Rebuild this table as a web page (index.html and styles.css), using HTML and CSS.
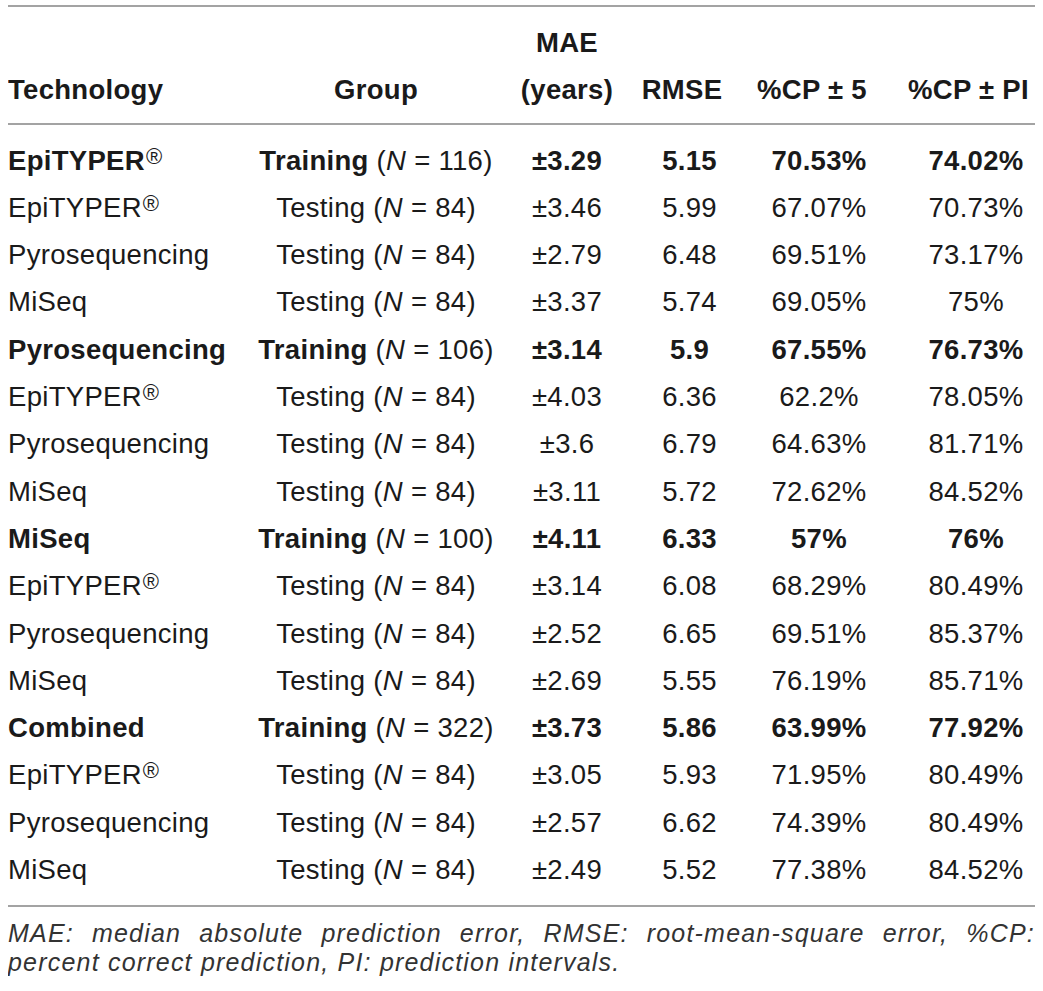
FILE: index.html
```html
<!DOCTYPE html>
<html lang="en">
<head>
  <meta charset="UTF-8" />
  <meta name="viewport" content="width=device-width, initial-scale=1.0"/>
  <title>Prediction accuracy by technology</title>
  <link rel="stylesheet" href="styles.css">
</head>
<body>
  <table class="results">
    <colgroup>
      <col class="c-tech">
      <col class="c-group">
      <col class="c-mae">
      <col class="c-rmse">
      <col class="c-cp5">
      <col class="c-cppi">
    </colgroup>
    <thead>
      <tr>
        <th class="tech">Technology</th>
        <th>Group</th>
        <th>MAE<br>(years)</th>
        <th>RMSE</th>
        <th class="cp5">%CP ± 5</th>
        <th>%CP ± PI</th>
      </tr>
    </thead>
    <tbody>
      <tr class="train">
        <td class="tech">EpiTYPER<sup>®</sup></td>
        <td>Training <span class="n">(<i>N</i> = 116)</span></td>
        <td>±3.29</td><td class="rmse">5.15</td><td class="cp5">70.53%</td><td class="cppi">74.02%</td>
      </tr>
      <tr>
        <td class="tech">EpiTYPER<sup>®</sup></td>
        <td>Testing (<i>N</i> = 84)</td>
        <td>±3.46</td><td class="rmse">5.99</td><td class="cp5">67.07%</td><td class="cppi">70.73%</td>
      </tr>
      <tr>
        <td class="tech">Pyrosequencing</td>
        <td>Testing (<i>N</i> = 84)</td>
        <td>±2.79</td><td class="rmse">6.48</td><td class="cp5">69.51%</td><td class="cppi">73.17%</td>
      </tr>
      <tr>
        <td class="tech">MiSeq</td>
        <td>Testing (<i>N</i> = 84)</td>
        <td>±3.37</td><td class="rmse">5.74</td><td class="cp5">69.05%</td><td class="cppi">75%</td>
      </tr>
      <tr class="train">
        <td class="tech">Pyrosequencing</td>
        <td>Training <span class="n">(<i>N</i> = 106)</span></td>
        <td>±3.14</td><td class="rmse">5.9</td><td class="cp5">67.55%</td><td class="cppi">76.73%</td>
      </tr>
      <tr>
        <td class="tech">EpiTYPER<sup>®</sup></td>
        <td>Testing (<i>N</i> = 84)</td>
        <td>±4.03</td><td class="rmse">6.36</td><td class="cp5">62.2%</td><td class="cppi">78.05%</td>
      </tr>
      <tr>
        <td class="tech">Pyrosequencing</td>
        <td>Testing (<i>N</i> = 84)</td>
        <td>±3.6</td><td class="rmse">6.79</td><td class="cp5">64.63%</td><td class="cppi">81.71%</td>
      </tr>
      <tr>
        <td class="tech">MiSeq</td>
        <td>Testing (<i>N</i> = 84)</td>
        <td>±3.11</td><td class="rmse">5.72</td><td class="cp5">72.62%</td><td class="cppi">84.52%</td>
      </tr>
      <tr class="train">
        <td class="tech">MiSeq</td>
        <td>Training <span class="n">(<i>N</i> = 100)</span></td>
        <td>±4.11</td><td class="rmse">6.33</td><td class="cp5">57%</td><td class="cppi">76%</td>
      </tr>
      <tr>
        <td class="tech">EpiTYPER<sup>®</sup></td>
        <td>Testing (<i>N</i> = 84)</td>
        <td>±3.14</td><td class="rmse">6.08</td><td class="cp5">68.29%</td><td class="cppi">80.49%</td>
      </tr>
      <tr>
        <td class="tech">Pyrosequencing</td>
        <td>Testing (<i>N</i> = 84)</td>
        <td>±2.52</td><td class="rmse">6.65</td><td class="cp5">69.51%</td><td class="cppi">85.37%</td>
      </tr>
      <tr>
        <td class="tech">MiSeq</td>
        <td>Testing (<i>N</i> = 84)</td>
        <td>±2.69</td><td class="rmse">5.55</td><td class="cp5">76.19%</td><td class="cppi">85.71%</td>
      </tr>
      <tr class="train">
        <td class="tech">Combined</td>
        <td>Training <span class="n">(<i>N</i> = 322)</span></td>
        <td>±3.73</td><td class="rmse">5.86</td><td class="cp5">63.99%</td><td class="cppi">77.92%</td>
      </tr>
      <tr>
        <td class="tech">EpiTYPER<sup>®</sup></td>
        <td>Testing (<i>N</i> = 84)</td>
        <td>±3.05</td><td class="rmse">5.93</td><td class="cp5">71.95%</td><td class="cppi">80.49%</td>
      </tr>
      <tr>
        <td class="tech">Pyrosequencing</td>
        <td>Testing (<i>N</i> = 84)</td>
        <td>±2.57</td><td class="rmse">6.62</td><td class="cp5">74.39%</td><td class="cppi">80.49%</td>
      </tr>
      <tr>
        <td class="tech">MiSeq</td>
        <td>Testing (<i>N</i> = 84)</td>
        <td>±2.49</td><td class="rmse">5.52</td><td class="cp5">77.38%</td><td class="cppi">84.52%</td>
      </tr>
    </tbody>
  </table>
  <p class="note">MAE: median absolute prediction error, RMSE: root-mean-square error, %CP: percent correct prediction, PI: prediction intervals.</p>
</body>
</html>
```

FILE: styles.css
```css
body {
  margin: 5px 8px;
  background: #fff;
  color: #1a1a1a;
  font-family: 'Liberation Sans', Arial, sans-serif;
}
.results {
  width: 1027px;
  table-layout: fixed;
  border-collapse: collapse;
  font-size: 27.5px;
  line-height: 47.3px;
  letter-spacing: 0.3px;
  border-top: 2px solid #a3a3a3;
  border-bottom: 2px solid #a3a3a3;
}
.c-tech { width: 232px; }
.c-group { width: 272px; }
.c-mae { width: 110px; }
.c-rmse { width: 120px; }
.c-cp5 { width: 160px; }
.c-cppi { width: 133px; }
th, td {
  padding: 0;
  text-align: center;
  white-space: nowrap;
}
th {
  font-weight: bold;
  vertical-align: bottom;
  padding-top: 12px;
  padding-bottom: 9px;
  border-bottom: 2px solid #a3a3a3;
}
.tech {
  text-align: left;
}
th.cp5 {
  padding-right: 20px;
}
td.rmse {
  padding-left: 15px;
}
td.cp5 {
  padding-right: 6px;
}
td.cppi {
  padding-left: 15px;
}
tbody tr:first-child td {
  padding-top: 12px;
}
tbody tr:last-child td {
  padding-bottom: 12px;
}
.train td {
  font-weight: bold;
}
.train .n {
  font-weight: normal;
}
sup {
  font-size: 22px;
  font-weight: normal;
  line-height: 0;
  vertical-align: 6px;
  margin-left: 1px;
}
.note {
  margin: 12px 0 0;
  width: 1027px;
  font-size: 25px;
  line-height: 29px;
  letter-spacing: 1.2px;
  font-style: italic;
  color: #333;
  text-align: justify;
}
```
